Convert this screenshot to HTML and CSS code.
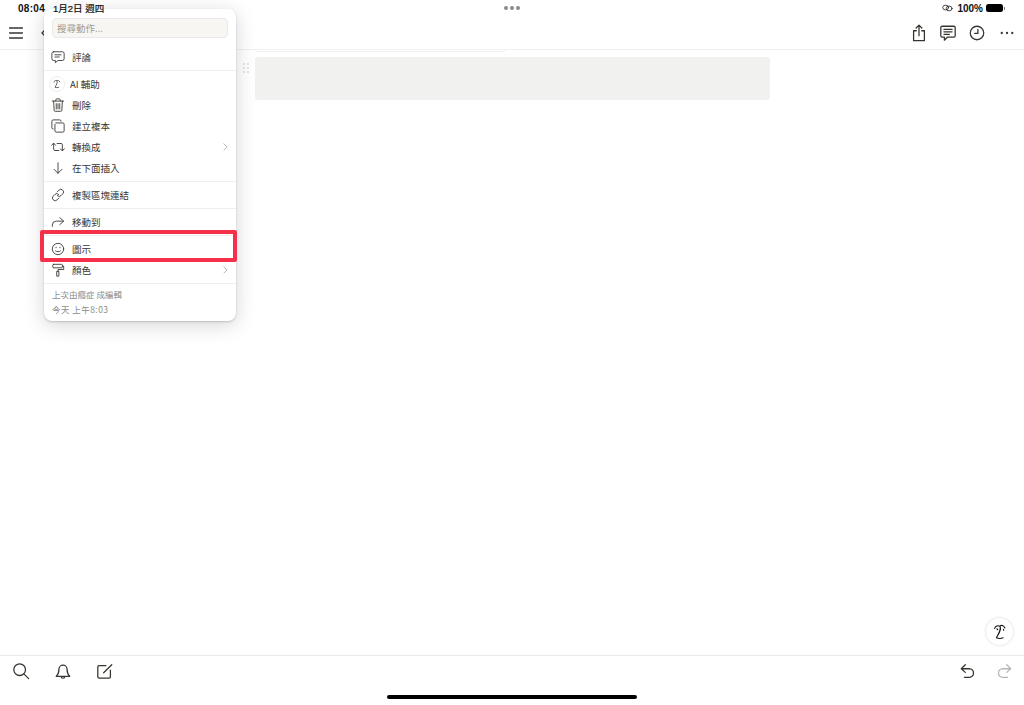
FILE: index.html
```html
<!DOCTYPE html>
<html lang="zh-Hant">

<head>
    <meta charset="utf-8">
    <title>圖示</title>
    <link rel="stylesheet" href="styles.css">
</head>

<body>
    <div class="screen">
        <div class="status">
            <span class="time">08:04</span>
            <span class="date">1月2日 週四</span>
            <div class="dots"><i></i><i></i><i></i></div>
            <div class="status-right">
                <svg class="link-icon" viewBox="0 0 12 8">
                    <ellipse cx="4" cy="3.5" rx="3.2" ry="2.6" />
                    <ellipse cx="7.8" cy="4.5" rx="3.2" ry="2.6" />
                </svg>
                <span class="battery-text">100%</span>
                <div class="battery"></div>
                <div class="battery-cap"></div>
            </div>
        </div>

        <header class="topbar">
            <div class="topbar-left">
                <svg class="icon-menu" viewBox="0 0 14 12">
                    <path d="M0.5 1h13M0.5 6h13M0.5 11h13" />
                </svg>
                <svg class="icon-back" viewBox="0 0 6 10">
                    <path d="M4.5 1.5 1 5l3.5 3.5" />
                </svg>
            </div>
            <div class="topbar-right">
                <svg class="icon" viewBox="0 0 20 20">
                    <path d="M7 7.5H4v11h12v-11H13M10 13V1.5M6.8 4.5 10 1.3l3.2 3.2" />
                </svg>
                <svg class="icon" viewBox="0 0 20 20">
                    <path d="M3.5 2.5h13a1.5 1.5 0 0 1 1.5 1.5v9a1.5 1.5 0 0 1-1.5 1.5H9.5L6 18v-3.5H3.5A1.5 1.5 0 0 1 2 13V4a1.5 1.5 0 0 1 1.5-1.5zM5.5 6h9M5.5 8.7h9M5.5 11.4h6" />
                </svg>
                <svg class="icon" viewBox="0 0 20 20">
                    <circle cx="10" cy="10" r="7.5" />
                    <path d="M11 6v4.5H7.5" />
                </svg>
                <svg class="icon-more" viewBox="0 0 16 4">
                    <circle cx="2" cy="2" r="1.3" />
                    <circle cx="8" cy="2" r="1.3" />
                    <circle cx="14" cy="2" r="1.3" />
                </svg>
            </div>
        </header>

        <main class="content">
            <div class="card-edge"></div>
            <div class="block-row">
                <svg class="handle" viewBox="0 0 6 10">
                    <circle cx="1" cy="1" r=".8" />
                    <circle cx="5" cy="1" r=".8" />
                    <circle cx="1" cy="5" r=".8" />
                    <circle cx="5" cy="5" r=".8" />
                    <circle cx="1" cy="9" r=".8" />
                    <circle cx="5" cy="9" r=".8" />
                </svg>
                <div class="block"></div>
            </div>
            <button class="ai-float">
                <svg class="ai-float-icon" viewBox="0 0 20 20">
                    <path d="M4 6C5 3 7.500 2.500 10 3.500c1.500-1.500 4-1 5.500 2M10 3.500c1.500 3.500-.5 7-4 13 2.500 1 5 1 7.500 0M6.500 6.500l1 1M14 7v1" />
                </svg>
            </button>
        </main>

        <footer class="bottombar">
            <div class="bottom-left">
                <svg class="icon" viewBox="0 0 20 20">
                    <circle cx="8.5" cy="8.5" r="6.5" />
                    <path d="m13.5 13.5 5 5" />
                </svg>
                <svg class="icon" viewBox="0 0 20 20">
                    <path d="M2.500 16c2-2 3-3.500 3-8a4.500 4.500 0 0 1 9 0c0 4.500 1 6 3 8zM8 16a2 2 0 0 0 4 0" />
                </svg>
                <svg class="icon" viewBox="0 0 20 20">
                    <path d="M11 4H3.500A1.500 1.500 0 0 0 2 5.500v11A1.500 1.500 0 0 0 3.500 18h11a1.500 1.500 0 0 0 1.500-1.500V9M8.500 12 17.500 3" />
                </svg>
            </div>
            <div class="bottom-right">
                <svg class="icon" viewBox="0 0 20 20">
                    <path d="M7 3 2.500 7.500 7 11.500M3 7.500h9a4.800 4.800 0 0 1 0 9.500H6" />
                </svg>
                <svg class="icon icon-off" viewBox="0 0 20 20">
                    <path d="M13 3l4.500 4.500L13 11.500M17 7.500H8a4.800 4.800 0 0 0 0 9.500h6" />
                </svg>
            </div>
        </footer>
        <div class="home-bar"></div>

        <div class="menu">
            <div class="menu-search">
                <div class="search-box">搜尋動作...</div>
            </div>
            <div class="menu-group menu-first">
                <div class="item">
                    <svg class="item-icon" viewBox="0 0 16 16">
                        <path d="M3 2h10a2 2 0 0 1 2 2v6a2 2 0 0 1-2 2H8l-3 2.500V12H3a2 2 0 0 1-2-2V4a2 2 0 0 1 2-2zM4.500 5.500h7M4.500 8h5" />
                    </svg>
                    <span>評論</span>
                </div>
            </div>
            <div class="menu-group">
                <div class="item item-ai">
                    <div class="ai-badge">
                        <svg viewBox="0 0 20 20">
                            <path d="M4 6C5 3 7.500 2.500 10 3.500c1.500-1.500 4-1 5.500 2M10 3.500c1.500 3.500-.5 7-4 13 2.500 1 5 1 7.500 0" />
                        </svg>
                    </div>
                    <span>AI 輔助</span>
                </div>
                <div class="item">
                    <svg class="item-icon" viewBox="0 0 16 16">
                        <path d="M1.500 3.500h13M5.500 3.500V2a1 1 0 0 1 1-1h3a1 1 0 0 1 1 1v1.500M3 3.500l.6 10.500a1.200 1.200 0 0 0 1.200 1.200h6.400a1.200 1.200 0 0 0 1.200-1.200l.6-10.500M6 6.500v6M8 6.500v6M10 6.500v6" />
                    </svg>
                    <span>刪除</span>
                </div>
                <div class="item">
                    <svg class="item-icon" viewBox="0 0 16 16">
                        <path d="M5.500 4.500h8a1.500 1.500 0 0 1 1.500 1.500v7.500a1.500 1.500 0 0 1-1.500 1.500H6A1.500 1.500 0 0 1 4.500 13.500V6M2.500 11.500A1.500 1.500 0 0 1 1 10V2.500A1.500 1.500 0 0 1 2.500 1H10a1.500 1.500 0 0 1 1.500 1.500" />
                    </svg>
                    <span>建立複本</span>
                </div>
                <div class="item">
                    <svg class="item-icon" viewBox="0 0 16 16">
                        <path d="M.8 6 3 3.500 5.200 6M3 4v6.500a1.500 1.500 0 0 0 1.500 1.500H9M7 4h4.500A1.500 1.500 0 0 1 13 5.500V12M10.800 10 13 12.500 15.200 10" />
                    </svg>
                    <span>轉換成</span>
                    <svg class="chevron" viewBox="0 0 6 10">
                        <path d="m1 1 4 4-4 4" />
                    </svg>
                </div>
                <div class="item">
                    <svg class="item-icon" viewBox="0 0 16 16">
                        <path d="M8 2v12M3.500 9.500 8 14l4.500-4.500" />
                    </svg>
                    <span>在下面插入</span>
                </div>
            </div>
            <div class="menu-group">
                <div class="item">
                    <svg class="item-icon" viewBox="0 0 16 16">
                        <path d="M7 4.500 9 2.500a3 3 0 0 1 4.500 4.200l-2 2a3 3 0 0 1-4.300 0M9 11.500l-2 2a3 3 0 0 1-4.500-4.200l2-2a3 3 0 0 1 4.300 0" />
                    </svg>
                    <span>複製區塊連結</span>
                </div>
            </div>
            <div class="menu-group">
                <div class="item">
                    <svg class="item-icon" viewBox="0 0 16 16">
                        <path d="M10 3l4.500 4L10 11M14 7H6a4.500 4.500 0 0 0-4.500 4.500V13" />
                    </svg>
                    <span>移動到</span>
                </div>
            </div>
            <div class="menu-group">
                <div class="item">
                    <svg class="item-icon" viewBox="0 0 16 16">
                        <circle cx="8" cy="8" r="6.500" />
                        <path d="M5.200 10.200c1.500 1.300 4.100 1.300 5.600 0M5.800 6v.6M10.200 6v.6" />
                    </svg>
                    <span>圖示</span>
                </div>
                <div class="item">
                    <svg class="item-icon" viewBox="0 0 16 16">
                        <path d="M3 1.500h9a1 1 0 0 1 1 1v2a1 1 0 0 1-1 1H3a1 1 0 0 1-1-1v-2a1 1 0 0 1 1-1zM13 3.500h1.500v4H8v2M7 9.500h2v5.500H7z" />
                    </svg>
                    <span>顏色</span>
                    <svg class="chevron" viewBox="0 0 6 10">
                        <path d="m1 1 4 4-4 4" />
                    </svg>
                </div>
            </div>
            <div class="menu-foot">
                <div>上次由癮症 成編輯</div>
                <div class="foot-time">今天 上午8:03</div>
            </div>
        </div>

        <!-- annotation over the screenshot -->
        <div class="highlight"></div>
    </div>
</body>

</html>
```

FILE: styles.css
```css
* {
    box-sizing: border-box;
}

html,
body {
    margin: 0;
    height: 100%;
    background: #fff;
}

body {
    font-family: "Liberation Sans", "Noto Sans CJK TC", sans-serif;
    color: #37352f;
    overflow: hidden;
}

svg {
    display: block;
    fill: none;
    stroke: #37352f;
    stroke-linecap: round;
    stroke-linejoin: round;
}

.screen {
    position: relative;
    height: 705px;
    display: flex;
    flex-direction: column;
}

/* sits above the menu, the date runs right over its top edge */
.status {
    height: 17px;
    padding: 0 19px 1px 18px;
    display: flex;
    align-items: center;
    font-size: 9.5px;
    font-weight: bold;
    color: #111;
    position: relative;
    z-index: 2;
}

.time {
    width: 35px;
    font-size: 10px;
    letter-spacing: 0.3px;
}

.date {
    font-weight: normal;
    -webkit-text-stroke: 0.2px #111;
}

.dots {
    position: absolute;
    left: 504px;
    top: 6px;
    display: flex;
    gap: 2px;
}

.dots i {
    width: 4px;
    height: 4px;
    border-radius: 50%;
    background: #8a8a8a;
}

.status-right {
    margin-left: auto;
    display: flex;
    align-items: center;
}

.link-icon {
    width: 11px;
    height: 8px;
    stroke: #222;
    stroke-width: 0.9;
    margin-right: 4px;
}

.battery-text {
    font-size: 10px;
    margin-right: 3px;
}

.battery {
    width: 17px;
    height: 8px;
    border-radius: 2.5px;
    background: #000;
}

.battery-cap {
    width: 1px;
    height: 3px;
    margin-left: 1px;
    background: #777;
}

.topbar {
    height: 33px;
    padding: 0 10px 1px 9px;
    display: flex;
    align-items: center;
    justify-content: space-between;
    border-bottom: 1px solid #f1f1ef;
}

.topbar-left {
    display: flex;
    align-items: center;
    gap: 18px;
}

.icon-menu {
    width: 14px;
    height: 12px;
    stroke-width: 1.4;
}

.icon-back {
    width: 6px;
    height: 10px;
    stroke-width: 1.3;
}

.topbar-right {
    display: flex;
    align-items: center;
    gap: 11px;
}

.icon {
    width: 18px;
    height: 18px;
    stroke-width: 1.4;
}

.icon-off {
    stroke: #b5b5b3;
}

.icon-more {
    width: 14px;
    height: 4px;
    margin-left: 3px;
    fill: #37352f;
    stroke: none;
}

.content {
    flex: 1;
    position: relative;
    padding-left: 243px;
}

.card-edge {
    width: 250px;
    height: 2px;
    margin-left: 12px;
    border: 1px solid #efefed;
    border-top: none;
    border-radius: 0 0 4px 4px;
}

.block-row {
    margin-top: 5px;
    display: flex;
    gap: 6px;
}

.handle {
    width: 6px;
    height: 10px;
    margin-top: 6px;
    fill: #c4c4c2;
    stroke: none;
}

.block {
    width: 515px;
    height: 43px;
    border-radius: 3px;
    background: #f1f1ef;
}

.ai-float {
    position: absolute;
    right: 11px;
    bottom: 10px;
    width: 27px;
    height: 27px;
    padding: 0;
    display: flex;
    align-items: center;
    justify-content: center;
    border: none;
    border-radius: 50%;
    background: #fff;
    box-shadow: 0 0 3px rgba(0, 0, 0, 0.18);
}

.ai-float-icon {
    width: 18px;
    height: 18px;
    stroke: #111;
    stroke-width: 1.2;
}

.bottombar {
    height: 40px;
    padding: 0 11px 0 12px;
    display: flex;
    justify-content: space-between;
    align-items: flex-start;
    border-top: 1px solid #e9e9e7;
}

.bottom-left,
.bottom-right {
    padding-top: 6px;
    display: flex;
}

.bottom-left {
    gap: 24px;
}

.bottom-right {
    gap: 18px;
}

.home-bar {
    height: 4px;
    width: 250px;
    margin: 0 auto 6px;
    border-radius: 2px;
    background: #000;
}

.menu {
    position: absolute;
    left: 44px;
    top: 9px;
    width: 192px;
    height: 312px;
    border-radius: 8px;
    background: #fff;
    box-shadow: 0 4px 20px rgba(0, 0, 0, 0.17), 0 1px 2px rgba(0, 0, 0, 0.18);
    font-family: "Noto Sans CJK TC", sans-serif;
    font-size: 9.5px;
}

.menu-search {
    padding: 9px 8px 0;
}

.search-box {
    height: 20px;
    padding-left: 4px;
    display: flex;
    align-items: center;
    border: 1px solid #e9e9e6;
    border-radius: 4px;
    background: #f7f6f3;
    color: #9b9a97;
}

.menu-group {
    padding: 2.5px 0;
    border-top: 1px solid #efefed;
}

.menu-first {
    margin-top: 8.5px;
    padding-top: 0;
    border-top: none;
}

.item {
    height: 21px;
    padding: 0 8px 0 7px;
    display: flex;
    align-items: center;
}

.item-icon {
    width: 14px;
    height: 14px;
    margin-right: 7px;
    stroke-width: 1;
}

.item-ai {
    padding-left: 5px;
}

.ai-badge {
    width: 16px;
    height: 16px;
    margin-right: 5px;
    padding: 2px;
    border: 1px solid #eeeeec;
    border-radius: 50%;
}

.ai-badge svg {
    width: 10px;
    height: 10px;
    stroke-width: 1.5;
}

.chevron {
    width: 5px;
    height: 8px;
    margin-left: auto;
    stroke: #a3a3a1;
    stroke-width: 1;
}

.menu-foot {
    padding: 3px 8px 0;
    border-top: 1px solid #efefed;
    font-size: 8.5px;
    line-height: 15px;
    color: #8c8b88;
}

.foot-time {
    letter-spacing: 0.45px;
}

.highlight {
    position: absolute;
    left: 40px;
    top: 230px;
    width: 197px;
    height: 32px;
    border: 4px solid #f5304a;
    border-radius: 2px;
}
```
